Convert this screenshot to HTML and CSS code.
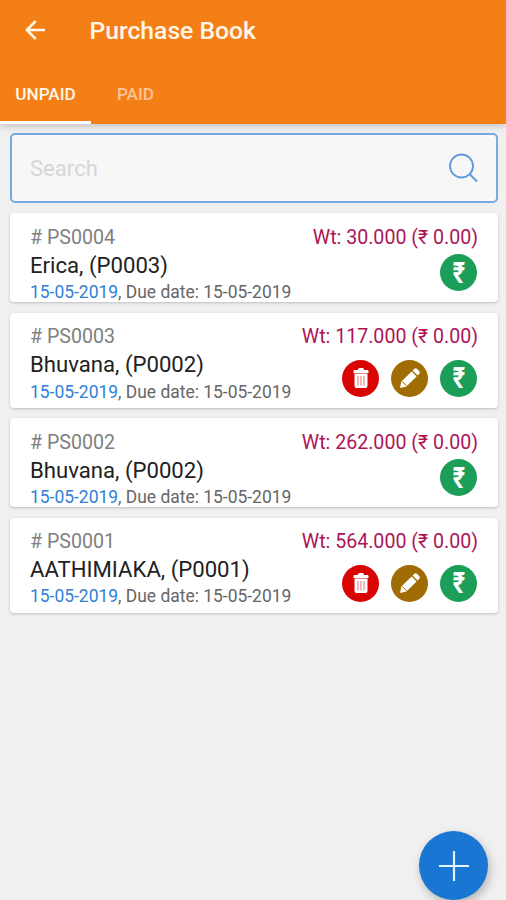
FILE: index.html
```html
<!DOCTYPE html>
<html lang="en">
<head>
    <meta charset="UTF-8">
    <meta name="viewport" content="width=device-width, initial-scale=1.0">
    <title>Purchase Book</title>
    <link rel="stylesheet" href="styles.css">
</head>
<body>
    <svg width="0" height="0" class="symbols">
        <symbol id="trash" viewBox="0 0 16 20">
            <path fill="#fff" d="M5 1.5Q5 0 6.5 0h3Q11 0 11 1.5V2h3.5q1 0 1 1v2H.5V3q0-1 1-1H5zM1.5 5.5h13V18q0 2-2 2h-9q-2 0-2-2z"/>
            <path stroke="#e98a8a" stroke-width="1.2" d="M5 8v9.5M8 8v9.5M11 8v9.5"/>
        </symbol>
        <symbol id="pencil" viewBox="0 0 20 20">
            <path fill="#fff" d="M0 20l1.4-6.400L11.600 3.400l5 5L6.400 18.600zM12.600 2.400l1.500-1.500q1.500-1.500 3 0l2 2q1.500 1.500 0 3l-1.500 1.500z"/>
            <path stroke="#a06c04" stroke-width="1" d="M2.200 13.400l4.400 4.400"/>
        </symbol>
    </svg>

    <header class="app-bar">
        <div class="title-row">
            <svg class="back" width="20" height="20" viewBox="0 0 20 20" fill="none" stroke="#fff6e8" stroke-width="2.5">
                <path d="M10.8 1L1.8 10l9 9M2 10h18"/>
            </svg>
            <h1>Purchase Book</h1>
        </div>
        <nav class="tabs">
            <a class="tab active">UNPAID</a>
            <a class="tab">PAID</a>
        </nav>
    </header>

    <main class="content">
        <div class="search">
            <span>Search</span>
            <svg width="30" height="30" viewBox="0 0 30 30" fill="none" stroke="#5f9bdc" stroke-width="1.9">
                <circle cx="13.5" cy="13" r="11.5"/>
                <path d="M21.5 21l7.5 7.5"/>
            </svg>
        </div>

        <section class="card">
            <div class="info">
                <div class="number"># PS0004</div>
                <div class="name">Erica, (P0003)</div>
                <div class="dates"><span>15-05-2019</span>, Due date: 15-05-2019</div>
            </div>
            <div class="side">
                <div class="amount">Wt: 30.000 (₹ 0.00)</div>
                <div class="actions">
                    <span class="btn pay"><b>₹</b></span>
                </div>
            </div>
        </section>

        <section class="card tall">
            <div class="info">
                <div class="number"># PS0003</div>
                <div class="name">Bhuvana, (P0002)</div>
                <div class="dates"><span>15-05-2019</span>, Due date: 15-05-2019</div>
            </div>
            <div class="side">
                <div class="amount">Wt: 117.000 (₹ 0.00)</div>
                <div class="actions">
                    <span class="btn delete"><svg width="16" height="20"><use href="#trash"/></svg></span>
                    <span class="btn edit"><svg width="20" height="20"><use href="#pencil"/></svg></span>
                    <span class="btn pay"><b>₹</b></span>
                </div>
            </div>
        </section>

        <section class="card">
            <div class="info">
                <div class="number"># PS0002</div>
                <div class="name">Bhuvana, (P0002)</div>
                <div class="dates"><span>15-05-2019</span>, Due date: 15-05-2019</div>
            </div>
            <div class="side">
                <div class="amount">Wt: 262.000 (₹ 0.00)</div>
                <div class="actions">
                    <span class="btn pay"><b>₹</b></span>
                </div>
            </div>
        </section>

        <section class="card tall">
            <div class="info">
                <div class="number"># PS0001</div>
                <div class="name">AATHIMIAKA, (P0001)</div>
                <div class="dates"><span>15-05-2019</span>, Due date: 15-05-2019</div>
            </div>
            <div class="side">
                <div class="amount">Wt: 564.000 (₹ 0.00)</div>
                <div class="actions">
                    <span class="btn delete"><svg width="16" height="20"><use href="#trash"/></svg></span>
                    <span class="btn edit"><svg width="20" height="20"><use href="#pencil"/></svg></span>
                    <span class="btn pay"><b>₹</b></span>
                </div>
            </div>
        </section>
    </main>

    <div class="fab">
        <svg width="30" height="30" viewBox="0 0 30 30" stroke="#e3f2ff" stroke-width="2.2">
            <path d="M15 0v30M0 15h30"/>
        </svg>
    </div>
</body>
</html>
```
FILE: styles.css
```css
* {
    box-sizing: border-box;
}
body {
    margin: 0;
    height: 900px;
    overflow: hidden;
    font-family: Roboto, "Liberation Sans", sans-serif;
    background-color: #f0f0f0;
}
.symbols {
    display: block;
}
.app-bar {
    height: 123.5px;
    background-color: #f57f17;
    color: #fff;
    box-shadow: 0 2px 7px rgba(0, 0, 0, 0.2);
}
.title-row {
    display: flex;
    align-items: center;
    height: 62px;
    padding-left: 25px;
}
.back {
    margin-top: -2px;
}
h1 {
    margin: -1px 0 0 44.5px;
    font-size: 24.7px;
    font-weight: 500;
    color: #fff6e8;
}
.tabs {
    display: flex;
    height: 61.5px;
}
.tab {
    width: 89px;
    line-height: 65px;
    text-align: center;
    font-size: 17.2px;
    font-weight: 500;
    color: #fbc598;
}
.tab.active {
    width: 91px;
    color: #fff6e8;
    border-bottom: 3px solid #fff;
}
.content {
    display: flex;
    flex-direction: column;
    gap: 10.4px;
    padding: 9.5px 8px 0 10px;
}
.search {
    display: flex;
    align-items: center;
    justify-content: space-between;
    height: 70px;
    padding: 0 18px;
    border: 2px solid #77abe0;
    border-radius: 5px;
    background-color: #f7f7f7;
    font-size: 22.1px;
    color: #d6d6d6;
}
.card {
    display: flex;
    justify-content: space-between;
    height: 89px;
    padding: 0 20px;
    border-radius: 4px;
    background-color: #fff;
    box-shadow: 0 1px 3px rgba(0, 0, 0, 0.22);
}
.card.tall {
    height: 95px;
}
.number, .amount {
    margin-top: 12.4px;
    font-size: 19.6px;
    line-height: 24px;
    white-space: nowrap;
}
.number {
    color: #808080;
}
.amount {
    color: #ad1457;
}
.name {
    font-size: 22.15px;
    line-height: 31.5px;
    color: #212121;
}
.dates {
    font-size: 17.45px;
    line-height: 22px;
    color: #666;
}
.dates span {
    color: #2f7fd8;
}
.actions {
    display: flex;
    justify-content: flex-end;
    gap: 12px;
    margin: 4.6px 1px 0 0;
}
.tall .actions {
    margin-top: 10.6px;
}
.btn {
    display: flex;
    align-items: center;
    justify-content: center;
    width: 37px;
    height: 37px;
    border-radius: 50%;
}
.delete {
    background-color: #d90404;
}
.edit {
    background-color: #a06c04;
}
.pay {
    background-color: #1b9e57;
    color: #fff;
    font-size: 26px;
}
.pay b {
    transform: scale(0.9, 1.13);
}
.fab {
    position: absolute;
    left: 419px;
    top: 831px;
    display: flex;
    align-items: center;
    justify-content: center;
    width: 69px;
    height: 69px;
    border-radius: 50%;
    background-color: #1976d2;
    box-shadow: 2px 4px 10px rgba(0, 0, 0, 0.25);
}
```
